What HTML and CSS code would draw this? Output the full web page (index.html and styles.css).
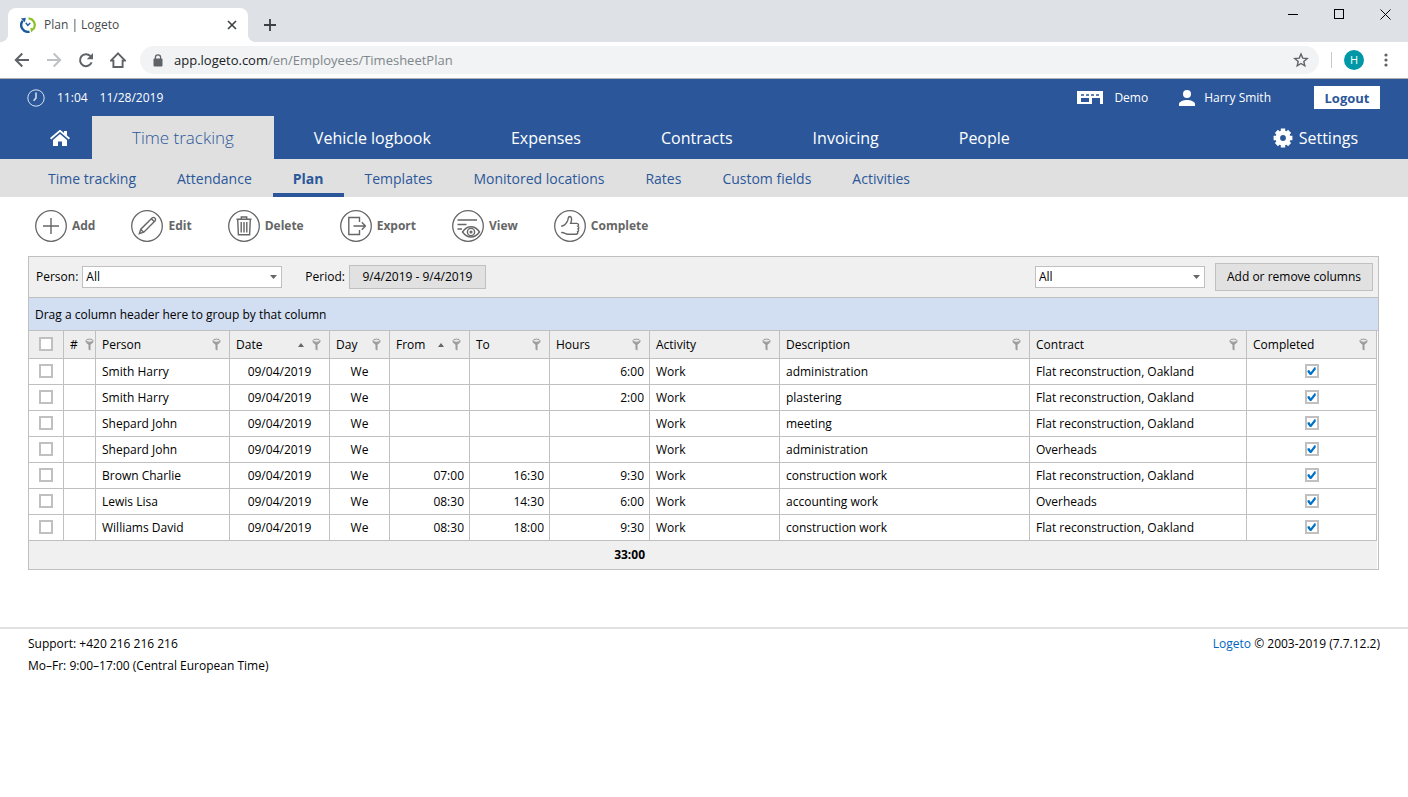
FILE: index.html
```html
<!DOCTYPE html>
<html lang="en">
<head>
<meta charset="utf-8">
<title>Plan | Logeto</title>
<link rel="stylesheet" href="styles.css">
</head>
<body>
<svg class="defs" aria-hidden="true">
  <symbol id="pin" viewBox="0 0 9 13">
    <path d="M.5 2.8 C.5 5.6 3 5.4 3.5 7 V11.4 L5.5 12.4 V7 C6 5.4 8.5 5.6 8.5 2.8 Z" fill="#9b9b9b"/>
    <ellipse cx="4.5" cy="2.7" rx="3.4" ry="1.6" fill="#e8e8e8" stroke="#9b9b9b"/>
  </symbol>
  <symbol id="ring" viewBox="0 0 32 32">
    <circle cx="16" cy="16" r="15.3" fill="none" stroke="#666" stroke-width="1.3"/>
  </symbol>
</svg>

<div class="tabstrip">
  <div class="tab">
    <svg class="favicon" viewBox="0 0 16 16" width="16" height="16" fill="none">
      <path d="M8.5 1.3 A6.7 6.7 0 0 1 13.4 12" stroke="#8cbf26" stroke-width="2.2"/>
      <path d="M10.2 11 L14.8 11.6 L11.2 15.4 Z" fill="#8cbf26"/>
      <path d="M9.5 14.6 A6.7 6.7 0 0 1 2.8 3.8" stroke="#1b5a9e" stroke-width="2.4"/>
      <path d="M.8 1.6 L5.8 .8 L5 5.2 Z" fill="#1b5a9e"/>
      <path d="M5.8 5.8 L7.8 8.4 L10.2 6" stroke="#1b5a9e" stroke-width="1.4"/>
    </svg>
    <span class="tab-title">Plan | Logeto</span>
    <button class="bare" aria-label="Close tab"><svg viewBox="0 0 10 10" width="10" height="10"><path d="M1 1 L9 9 M9 1 L1 9" stroke="#3c4043" stroke-width="1.6"/></svg></button>
  </div>
  <button class="bare new-tab" aria-label="New tab"><svg viewBox="0 0 12 12" width="12" height="12"><path d="M6 0 V12 M0 6 H12" stroke="#3c4043" stroke-width="1.8"/></svg></button>
  <div class="window-controls">
    <button class="bare" aria-label="Minimize"><svg viewBox="0 0 11 11" width="11" height="11"><path d="M0 5.5 H10" stroke="#000"/></svg></button>
    <button class="bare" aria-label="Maximize"><svg viewBox="0 0 11 11" width="11" height="11"><rect x=".5" y=".5" width="9" height="9" fill="none" stroke="#000"/></svg></button>
    <button class="bare" aria-label="Close"><svg viewBox="0 0 11 11" width="11" height="11"><path d="M.5 .5 L10.5 10.5 M10.5 .5 L.5 10.5" stroke="#000"/></svg></button>
  </div>
</div>

<div class="addressbar">
  <button class="bare" aria-label="Back"><svg viewBox="0 0 16 16" width="16" height="16" fill="none" stroke="#5f6368" stroke-width="2"><path d="M15 8 H2 M8.3 1.5 L1.8 8 L8.3 14.5"/></svg></button>
  <button class="bare" aria-label="Forward"><svg viewBox="0 0 16 16" width="16" height="16" fill="none" stroke="#bfc1c4" stroke-width="2"><path d="M1 8 H14 M7.7 1.5 L14.2 8 L7.7 14.5"/></svg></button>
  <button class="bare" aria-label="Reload"><svg viewBox="0 0 16 16" width="16" height="16" fill="none"><path d="M13.6 10.4 A6 6 0 1 1 12.4 4" stroke="#5f6368" stroke-width="2"/><path d="M15 1 V7.2 H8.8 Z" fill="#5f6368"/></svg></button>
  <button class="bare" aria-label="Home"><svg viewBox="1 1 16 16" width="16" height="16" fill="none" stroke="#5f6368" stroke-width="1.9"><path d="M2 9.6 H4.4 V16 H13.6 V9.6 H16 L9 2.4 Z"/></svg></button>
  <div class="omnibox">
    <svg viewBox="0 0 10 13" width="10" height="13"><rect x="0.5" y="4.5" width="9" height="8" rx="1" fill="#5f6368"/><path d="M2.4 5 V3.4 A2.6 2.6 0 0 1 7.6 3.4 V5" fill="none" stroke="#5f6368" stroke-width="1.3"/></svg>
    <span class="url"><span class="host">app.logeto.com</span>/en/Employees/TimesheetPlan</span>
    <button class="bare" aria-label="Bookmark this page"><svg viewBox="0 0 16 16" width="16" height="16" fill="none" stroke="#5f6368" stroke-width="1.4"><path d="M8 2 L9.7 6.1 L14.2 6.5 L10.8 9.4 L11.8 13.8 L8 11.5 L4.2 13.8 L5.2 9.4 L1.8 6.5 L6.3 6.1 Z"/></svg></button>
  </div>
  <span class="divider"></span>
  <span class="avatar">H</span>
  <button class="bare" aria-label="Menu"><svg viewBox="0 0 4 14" width="4" height="14" fill="#5f6368"><circle cx="2" cy="2" r="1.6"/><circle cx="2" cy="7" r="1.6"/><circle cx="2" cy="12" r="1.6"/></svg></button>
</div>

<header class="header">
  <div class="topline">
    <svg class="clock" viewBox="0 0 18 18" width="18" height="18" fill="none" stroke="#dbe3f0"><circle cx="9" cy="9" r="8.2"/><path d="M9 3.4 V9 L6.6 11.8" stroke-width="1.5"/></svg>
    <span class="time">11:04</span>
    <span>11/28/2019</span>
    <div class="account">
      <svg viewBox="0 0 26 13" width="26" height="13"><path fill="#fff" fill-rule="evenodd" d="M0 0 H26 V13 H23 V7 H15 V13 H0 Z M4 7 V11 H12 V7 Z"/><path d="M4 4 H23" stroke="#2b579a" stroke-width="1.6" stroke-dasharray="3 2"/></svg>
      <span class="demo">Demo</span>
      <svg viewBox="0 0 16 16" width="16" height="16" fill="#fff"><circle cx="8" cy="4" r="4"/><path d="M0 16 V14 C0 11.5 5 10 8 10 S16 11.5 16 14 V16 Z"/></svg>
      <span class="user">Harry Smith</span>
      <button class="logout">Logout</button>
    </div>
  </div>
  <nav class="mainnav">
    <a class="home" href="#" aria-label="Home"><svg viewBox="0 0 20 16" width="20" height="16" fill="#fff"><path d="M10 3.9 L17 10 V16 H12 V11.5 H8 V16 H3 V10 Z"/><path d="M14 1 H17 V6 L14 3.4 Z"/><path d="M.6 8.8 L10 .8 L19.4 8.8" fill="none" stroke="#fff" stroke-width="1.8"/></svg></a>
    <a class="active" href="#">Time tracking</a>
    <a href="#">Vehicle logbook</a>
    <a href="#">Expenses</a>
    <a href="#">Contracts</a>
    <a href="#">Invoicing</a>
    <a href="#">People</a>
    <a class="settings" href="#"><svg viewBox="0 0 20 20" width="20" height="20"><circle cx="10" cy="10" r="5.2" fill="none" stroke="#fff" stroke-width="4.6"/><path d="M10 .6 V4 M10 16 V19.4 M.6 10 H4 M16 10 H19.4 M3.4 3.4 L5.6 5.6 M14.4 14.4 L16.6 16.6 M3.4 16.6 L5.6 14.4 M14.4 5.6 L16.6 3.4" stroke="#fff" stroke-width="4.4"/></svg>Settings</a>
  </nav>
</header>

<nav class="subnav">
  <a href="#">Time tracking</a>
  <a href="#">Attendance</a>
  <a class="current" href="#">Plan</a>
  <a href="#">Templates</a>
  <a href="#">Monitored locations</a>
  <a href="#">Rates</a>
  <a href="#">Custom fields</a>
  <a href="#">Activities</a>
</nav>

<main class="content">
  <div class="actions">
    <button><svg viewBox="0 0 32 32"><use href="#ring"/><path d="M16 8 V24 M8 16 H24"/></svg>Add</button>
    <button><svg viewBox="0 0 32 32"><use href="#ring"/><path d="M8.3 23.7 L9.8 19.2 L21.3 7.8 Q22.6 6.8 23.9 8.1 Q25.2 9.4 24.2 10.7 L12.8 22.2 Z M20.4 8.8 L23.2 11.6 M9.8 19.6 L12.4 22"/></svg>Edit</button>
    <button><svg viewBox="0 0 32 32"><use href="#ring"/><path d="M8.5 9.2 H23.5 M13.3 9 V7 H18.7 V9 M9.7 9.5 L10.4 24.8 H21.6 L22.3 9.5 M13.2 12 V22.5 M16 12 V22.5 M18.8 12 V22.5"/></svg>Delete</button>
    <button><svg viewBox="0 0 32 32"><use href="#ring"/><path d="M19.5 12 V7.5 H8.8 V24.5 H19.5 V20 M13.5 16 H25.3 M21.8 12.3 L25.4 16 L21.8 19.7"/></svg>Export</button>
    <button><svg viewBox="0 0 32 32"><use href="#ring"/><path d="M5.5 10 H25 M5.5 14.5 H14.5 M5.5 19 H10 M10.5 22 Q14.2 16.8 19 16.8 T27.5 22 Q23.8 27 19 27 T10.5 22 Z"/><circle cx="19" cy="22" r="3.6"/><circle cx="19" cy="22" r=".9"/></svg>View</button>
    <button><svg viewBox="0 0 32 32"><use href="#ring"/><path d="M7.2 16.2 C9.5 16 12.3 13.2 13.6 10.8 C14.2 9.5 13.8 6.5 15.8 6.5 C18 6.6 18 10 16.6 13.4 H22.7 C24.7 13.4 25 15.6 23.9 16.1 C25.2 16.9 24.9 18.6 24 19 C25 20 24.6 21.3 23.6 21.7 C24.2 23.2 23.4 24.2 22 24.2 H14 C11 24.2 10.6 22.2 7.2 22.6"/></svg>Complete</button>
  </div>

  <section class="grid">
    <div class="filters">
      <label for="person">Person:</label>
      <select id="person" class="person"><option>All</option></select>
      <label for="period">Period:</label>
      <button id="period" class="button period">9/4/2019 - 9/4/2019</button>
      <select class="state" aria-label="State"><option>All</option></select>
      <button class="button columns">Add or remove columns</button>
    </div>
    <div class="grouping">Drag a column header here to group by that column</div>
    <table>
      <colgroup><col class="w-check"><col class="w-no"><col class="w-person"><col class="w-date"><col class="w-day"><col class="w-time"><col class="w-time"><col class="w-hours"><col class="w-activity"><col><col class="w-contract"><col class="w-done"></colgroup>
      <thead>
        <tr>
          <th class="mid"><input type="checkbox" aria-label="Select all"></th>
          <th class="tight"><div>#<svg><use href="#pin"/></svg></div></th>
          <th><div>Person<svg><use href="#pin"/></svg></div></th>
          <th><div>Date<i></i><svg><use href="#pin"/></svg></div></th>
          <th><div>Day<svg><use href="#pin"/></svg></div></th>
          <th><div>From<i></i><svg><use href="#pin"/></svg></div></th>
          <th><div>To<svg><use href="#pin"/></svg></div></th>
          <th><div>Hours<svg><use href="#pin"/></svg></div></th>
          <th><div>Activity<svg><use href="#pin"/></svg></div></th>
          <th><div>Description<svg><use href="#pin"/></svg></div></th>
          <th><div>Contract<svg><use href="#pin"/></svg></div></th>
          <th><div>Completed<svg><use href="#pin"/></svg></div></th>
        </tr>
      </thead>
      <tbody>
        <tr><td class="mid"><input type="checkbox" aria-label="Select row"></td><td></td><td>Smith Harry</td><td class="mid">09/04/2019</td><td class="mid">We</td><td class="num"></td><td class="num"></td><td class="num">6:00</td><td>Work</td><td>administration</td><td>Flat reconstruction, Oakland</td><td class="mid"><input type="checkbox" checked aria-label="Completed"></td></tr>
        <tr><td class="mid"><input type="checkbox" aria-label="Select row"></td><td></td><td>Smith Harry</td><td class="mid">09/04/2019</td><td class="mid">We</td><td class="num"></td><td class="num"></td><td class="num">2:00</td><td>Work</td><td>plastering</td><td>Flat reconstruction, Oakland</td><td class="mid"><input type="checkbox" checked aria-label="Completed"></td></tr>
        <tr><td class="mid"><input type="checkbox" aria-label="Select row"></td><td></td><td>Shepard John</td><td class="mid">09/04/2019</td><td class="mid">We</td><td class="num"></td><td class="num"></td><td class="num"></td><td>Work</td><td>meeting</td><td>Flat reconstruction, Oakland</td><td class="mid"><input type="checkbox" checked aria-label="Completed"></td></tr>
        <tr><td class="mid"><input type="checkbox" aria-label="Select row"></td><td></td><td>Shepard John</td><td class="mid">09/04/2019</td><td class="mid">We</td><td class="num"></td><td class="num"></td><td class="num"></td><td>Work</td><td>administration</td><td>Overheads</td><td class="mid"><input type="checkbox" checked aria-label="Completed"></td></tr>
        <tr><td class="mid"><input type="checkbox" aria-label="Select row"></td><td></td><td>Brown Charlie</td><td class="mid">09/04/2019</td><td class="mid">We</td><td class="num">07:00</td><td class="num">16:30</td><td class="num">9:30</td><td>Work</td><td>construction work</td><td>Flat reconstruction, Oakland</td><td class="mid"><input type="checkbox" checked aria-label="Completed"></td></tr>
        <tr><td class="mid"><input type="checkbox" aria-label="Select row"></td><td></td><td>Lewis Lisa</td><td class="mid">09/04/2019</td><td class="mid">We</td><td class="num">08:30</td><td class="num">14:30</td><td class="num">6:00</td><td>Work</td><td>accounting work</td><td>Overheads</td><td class="mid"><input type="checkbox" checked aria-label="Completed"></td></tr>
        <tr><td class="mid"><input type="checkbox" aria-label="Select row"></td><td></td><td>Williams David</td><td class="mid">09/04/2019</td><td class="mid">We</td><td class="num">08:30</td><td class="num">18:00</td><td class="num">9:30</td><td>Work</td><td>construction work</td><td>Flat reconstruction, Oakland</td><td class="mid"><input type="checkbox" checked aria-label="Completed"></td></tr>
      </tbody>
      <tfoot>
        <tr><td colspan="7"></td><td class="num">33:00</td><td colspan="4"></td></tr>
      </tfoot>
    </table>
  </section>
</main>

<footer class="footer">
  <div>Support: +420 216 216 216<br>Mo–Fr: 9:00–17:00 (Central European Time)</div>
  <div><a href="#">Logeto</a> © 2003-2019 (7.7.12.2)</div>
</footer>
</body>
</html>
```
FILE: styles.css
```css
* { box-sizing: border-box; }

body {
  margin: 0;
  background: #fff;
  color: #000;
  font: 12px/18px "Open Sans", "Noto Sans", sans-serif;
}

a { color: inherit; text-decoration: none; }
button, select, input { font: inherit; color: inherit; margin: 0; }
button { cursor: pointer; }
.defs { display: none; }

.bare {
  display: flex;
  padding: 0;
  border: 0;
  background: none;
}

/* Browser frame */
.tabstrip {
  display: flex;
  align-items: flex-end;
  height: 42px;
  padding-left: 8px;
  background: #dee1e6;
}

.tab {
  position: relative;
  display: flex;
  align-items: center;
  gap: 8px;
  width: 240px;
  height: 34px;
  padding: 0 11px 0 12px;
  border-radius: 8px 8px 0 0;
  background: #fff;
}

.tab::before,
.tab::after {
  content: "";
  position: absolute;
  bottom: 0;
  width: 8px;
  height: 8px;
}

.tab::before { left: -8px; background: radial-gradient(circle at 0 0, transparent 8px, #fff 8px); }
.tab::after { right: -8px; background: radial-gradient(circle at 100% 0, transparent 8px, #fff 8px); }
.tab-title { flex: 1; color: #45494d; }
.new-tab { margin: 0 0 11px 16px; }

.window-controls {
  display: flex;
  gap: 35px;
  align-self: flex-start;
  margin-left: auto;
  padding: 9px 17px 0 0;
}

.addressbar {
  display: flex;
  align-items: center;
  height: 37px;
  padding: 0 20px 0 14px;
  gap: 16px;
  border-bottom: 1px solid #b0b0b0;
}

.omnibox {
  display: flex;
  flex: 1;
  align-items: center;
  gap: 11px;
  height: 28px;
  margin-right: -4px;
  margin-left: -2px;
  padding: 0 10px 0 13px;
  border-radius: 14px;
  background: #f1f3f4;
}

.url { flex: 1; color: #80868b; font-size: 13px; }
.host { color: #202124; }
.divider { width: 1px; height: 16px; background: #c6c9cc; }

.avatar {
  width: 20px;
  margin: 0 4px 0 -4px;
  border-radius: 50%;
  background: #0097a7;
  color: #fff;
  font-size: 11px;
  line-height: 20px;
  text-align: center;
}

/* Application header */
.header { background: #2b579a; color: #fff; }

.topline {
  display: flex;
  align-items: center;
  height: 37px;
  padding: 0 28px 0 27px;
  line-height: 20px;
}

.time { margin: 0 12px; }
.account { display: flex; align-items: center; margin-left: auto; }
.demo { margin: 0 31px 0 11px; }
.user { margin: 0 43px 0 9px; }

.logout {
  width: 66px;
  height: 23px;
  padding: 0;
  border: 0;
  background: #fff;
  color: #2b579a;
  font-weight: 700;
  font-size: 13px;
}

.mainnav {
  display: flex;
  height: 43px;
  padding: 0 50px;
  font-size: 16px;
  line-height: 44px;
}

.mainnav a { padding: 0 40px; white-space: nowrap; }
.mainnav .home { display: flex; align-items: center; padding: 0 22px 0 0; }
.mainnav .active { background: #e0e0e0; color: #2b579a; font-size: 17px; font-weight: 300; }

.mainnav .settings {
  display: flex;
  align-items: center;
  gap: 6px;
  margin-left: auto;
  padding: 0;
}

.subnav {
  display: flex;
  gap: 1px;
  height: 38px;
  padding: 0 28px;
  background: #e0e0e0;
  color: #2b579a;
  font-size: 14px;
  line-height: 39px;
}

.subnav a { padding: 0 20px; white-space: nowrap; }
.subnav .current { border-bottom: 4px solid #2b579a; font-weight: 700; }

/* Content */
.content { padding: 13px 29px 0 28px; }

.actions {
  display: flex;
  gap: 36px;
  padding: 0 7px;
}

.actions button {
  display: flex;
  align-items: center;
  gap: 5px;
  padding: 0;
  border: 0;
  background: none;
  color: #666;
  font-weight: 700;
}

.actions svg {
  width: 32px;
  height: 32px;
  fill: none;
  stroke: #666;
  stroke-width: 1.4;
}

.grid {
  margin-top: 14px;
  padding-right: 1px;
  border: 1px solid #c0c0c0;
}

.filters {
  display: flex;
  align-items: center;
  gap: 4px;
  height: 41px;
  margin-right: -1px;
  padding: 0 5px 0 7px;
  border-bottom: 1px solid #c0c0c0;
  background: #f0f0f0;
}

select {
  height: 22px;
  padding: 0 3px;
  border: 1px solid #c0c0c0;
  border-radius: 0;
  appearance: none;
  background: #fff url("data:image/svg+xml,%3Csvg xmlns='http://www.w3.org/2000/svg' width='7' height='4'%3E%3Cpath d='M0 0H7L3.5 4Z' fill='%23666'/%3E%3C/svg%3E") no-repeat right 4px center;
}

.person { width: 200px; margin-right: 19px; }
.state { width: 170px; margin: 0 6px 0 auto; }

.button {
  height: 24px;
  padding: 0 9px;
  border: 1px solid #c0c0c0;
  background: #e1e1e1;
  white-space: nowrap;
}

.period { min-width: 137px; }
.columns { min-width: 158px; height: 28px; }

.grouping {
  margin-right: -1px;
  padding: 8px 6px 6px;
  border-bottom: 1px solid #c0c0c0;
  background: #d2def2;
}

table {
  width: 100%;
  border-collapse: separate;
  border-spacing: 0;
  table-layout: fixed;
}

.w-check { width: 35px; }
.w-no { width: 32px; }
.w-person { width: 134px; }
.w-date { width: 100px; }
.w-day { width: 60px; }
.w-time { width: 80px; }
.w-hours { width: 100px; }
.w-activity, .w-done { width: 130px; }
.w-contract { width: 217px; }

th, td {
  height: 26px;
  padding: 0 6px;
  border: solid #c0c0c0;
  border-width: 0 1px 1px 0;
  font-weight: 400;
  text-align: left;
  white-space: nowrap;
}

th { height: 28px; background: #eee; }
th div { display: flex; align-items: center; }
th.tight { padding: 0 1px 0 6px; }
th svg { width: 9px; height: 13px; margin-left: auto; }
th:not(.tight) svg { margin-right: 2px; }

th i {
  margin-left: auto;
  border: solid transparent;
  border-width: 0 3px 4px;
  border-bottom-color: #666;
}

th i + svg { margin-left: 8px; }
th.mid, td.mid { padding: 0; text-align: center; }
.num { padding: 0 5px; text-align: right; }

th input, td input {
  display: block;
  width: 14px;
  height: 14px;
  margin: 0 auto 1px;
  border: 2px solid #c0c0c0;
  appearance: none;
  background: #fff;
}

input:checked::before {
  content: "";
  display: block;
  width: 10px;
  height: 10px;
  background: #0072c6;
  clip-path: polygon(10% 45%, 28% 40%, 42% 62%, 82% 10%, 92% 14%, 92% 34%, 48% 90%, 34% 90%, 10% 60%);
}

tfoot td { height: 28px; border: 0; background: #f0f0f0; font-weight: 700; }

.footer {
  display: flex;
  justify-content: space-between;
  margin-top: 57px;
  padding: 4px 28px;
  border-top: 2px solid #e0e0e0;
  line-height: 22px;
}

.footer a { color: #0066c0; }
```
